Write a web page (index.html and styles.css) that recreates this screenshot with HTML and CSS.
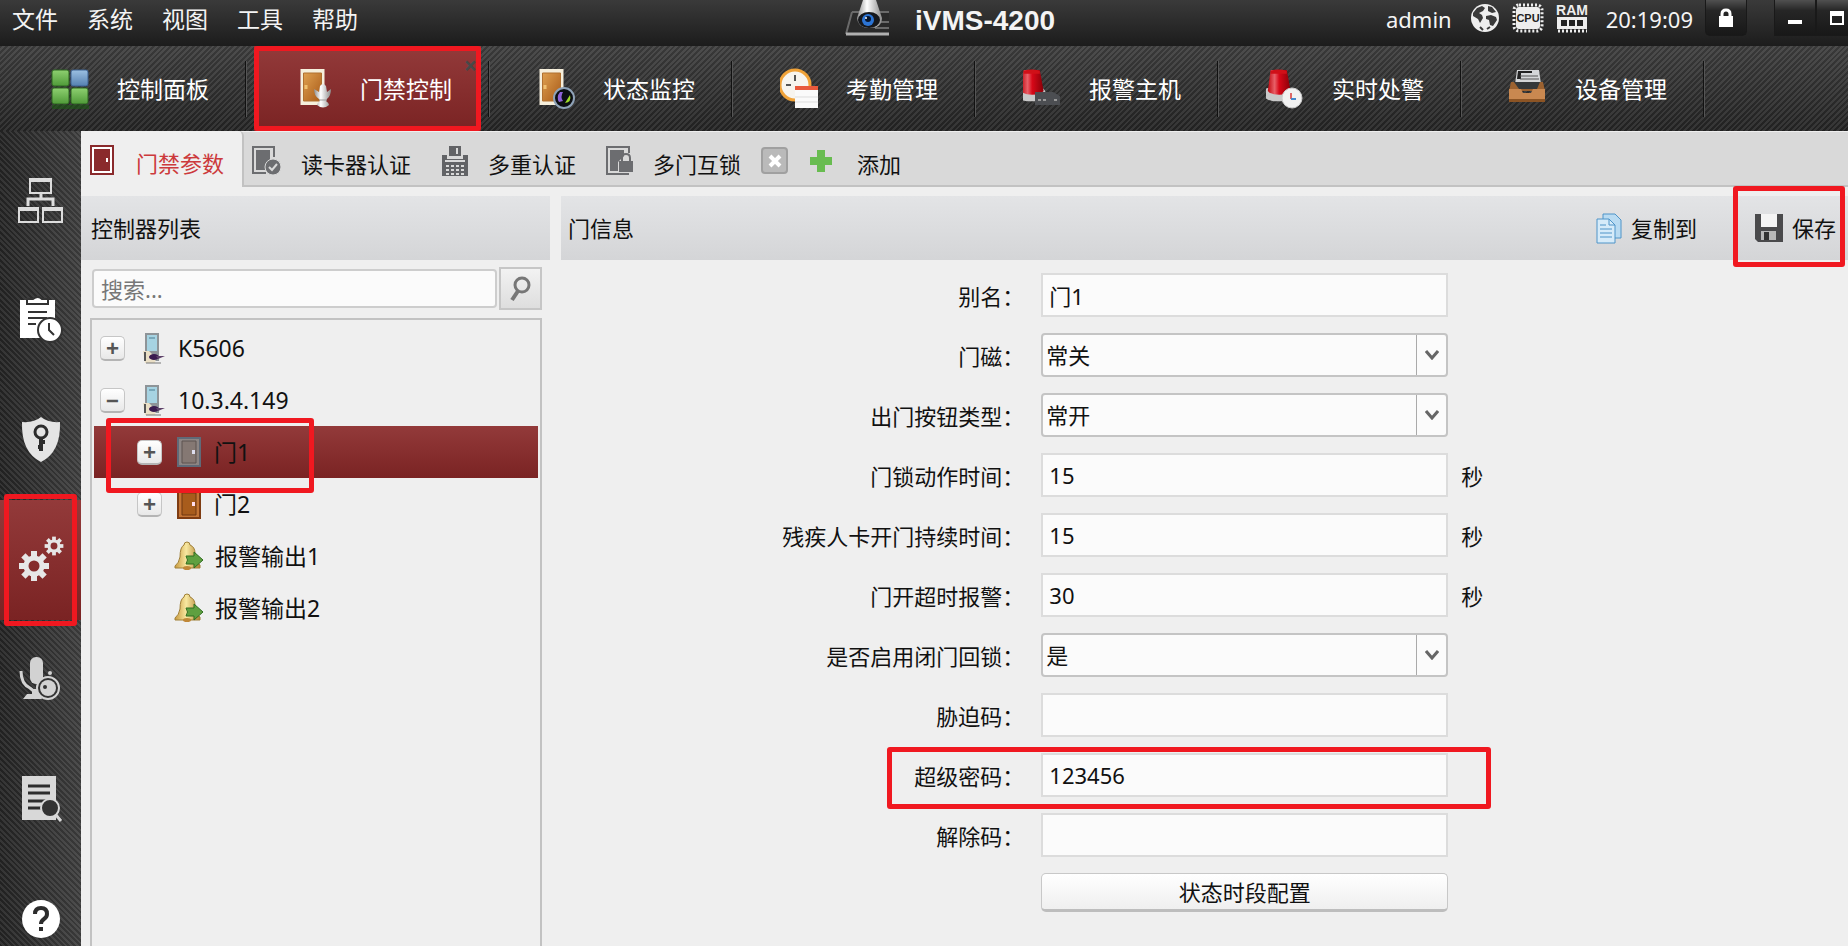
FILE: index.html
```html
<!DOCTYPE html>
<html lang="zh-CN">
<head>
<meta charset="utf-8">
<title>iVMS-4200</title>
<link rel="stylesheet" href="styles.css">
</head>
<body>
<svg class="defs" width="0" height="0" aria-hidden="true">
  <defs>
    <linearGradient id="gGreen" x2="0" y2="1"><stop offset="0" stop-color="#8ed070"/><stop offset="1" stop-color="#4f9a38"/></linearGradient>
    <linearGradient id="gBlue" x2="0" y2="1"><stop offset="0" stop-color="#9cc0e2"/><stop offset="1" stop-color="#5580b0"/></linearGradient>
    <linearGradient id="gWood" x2="1" y2="1"><stop offset="0" stop-color="#dfa050"/><stop offset="1" stop-color="#a85a18"/></linearGradient>
    <linearGradient id="gRed" x2="1" y2="0"><stop offset="0" stop-color="#c00810"/><stop offset=".3" stop-color="#e86068"/><stop offset=".5" stop-color="#d80818"/><stop offset="1" stop-color="#880008"/></linearGradient>
    <linearGradient id="gSteel" x2="1" y2="0"><stop offset="0" stop-color="#8c8c8c"/><stop offset=".4" stop-color="#fff"/><stop offset="1" stop-color="#8c8c8c"/></linearGradient>
    <linearGradient id="gBell" x2="1" y2="0"><stop offset="0" stop-color="#c89a40"/><stop offset=".45" stop-color="#f8e8a0"/><stop offset="1" stop-color="#b08030"/></linearGradient>
    <symbol id="door" viewBox="0 0 24 36"><path d="M0 0h24v36H0z" fill="#f6efdc"/><path d="M3 4h18v28H3z" fill="url(#gWood)" stroke="#b07030"/><path d="M4 16h3v4H4z" fill="#f0c070"/></symbol>
    <symbol id="device" viewBox="0 0 24 32"><path d="M3 1h14v28H3z" fill="#8e9498"/><path d="M5 3h10v16H5z" fill="#a6d3e2"/><path d="M7 5h6v2H7z" fill="#78a8ba"/><path d="M1 19h6l7 7-1 5H3z" fill="#eadfc6"/><path d="M3 20v9" stroke="#555" stroke-width="2"/><ellipse cx="12" cy="25" rx="5" ry="3" fill="#3a1c50"/><path d="M14 24l9 0-7 3z" fill="#5c4068"/><path d="M4 31h15" stroke="#777"/></symbol>
    <symbol id="bell" viewBox="0 0 30 30"><path d="M13 1q3 0 3 3 5 2 5 8v6q2 4 5 6v3H1v-2q4-3 5-9 0-10 4-12 0-3 3-3z" fill="url(#gBell)" stroke="#a08038"/><ellipse cx="13" cy="27" rx="4" ry="2" fill="#c08838"/><path d="M12 15h8v-4l9 8-9 8v-4h-8q3-4 0-8z" fill="#5fa040" stroke="#2f6e20"/></symbol>
    <symbol id="gear" viewBox="-16 -16 32 32"><g fill="#e6e6e6"><path id="t" d="M-3-15h6v8h-6z"/><use href="#t" transform="rotate(45)"/><use href="#t" transform="rotate(90)"/><use href="#t" transform="rotate(135)"/><use href="#t" transform="rotate(180)"/><use href="#t" transform="rotate(225)"/><use href="#t" transform="rotate(270)"/><use href="#t" transform="rotate(315)"/></g><circle r="8" fill="none" stroke="#e6e6e6" stroke-width="5"/></symbol>
    <symbol id="siren" viewBox="0 0 40 42"><path d="M0 26q0-5 4-6h22q4 1 4 6 0 8-15 8T0 26z" fill="#c9c9c9"/><path d="M7 1h17l4 22q-3 4-12 4T4 23z" fill="url(#gRed)"/><path d="M7 2q8-3 17 0v3H7z" fill="#d01018"/></symbol>
  </defs>
</svg>
<div class="app">
  <header class="titlebar">
    <nav class="menu" aria-label="菜单">
      <button>文件</button><button>系统</button><button>视图</button><button>工具</button><button>帮助</button>
    </nav>
    <div class="brand">
      <svg width="46" height="36" viewBox="0 0 46 36"><path d="M7 12h37v20H3z" fill="#2a2a2a"/><path d="M7 12L1 34M7 12h37M30 22h14M30 28h14" fill="none" stroke="#6a6a6a" stroke-width="2"/><path d="M1 34h43" stroke="#b0b0b0" stroke-width="3"/><path d="M18 0h13l6 18q0 10-12 10T12 18z" fill="url(#gSteel)"/><ellipse cx="24" cy="20" rx="11" ry="8" fill="#16181c"/><circle cx="23" cy="20" r="6" fill="#2c74d4"/><circle cx="23" cy="19" r="3" fill="#07152c"/><circle cx="21" cy="18" r="1" fill="#fff"/></svg>
      <h1>iVMS-4200</h1>
    </div>
    <div class="status">
      <span class="user">admin</span>
      <svg width="30" height="30" viewBox="0 0 30 30"><circle cx="15" cy="15" r="14" fill="#eee"/><path d="M3 10l4-5 5-2 3 2-2 3-4 2 3 2 1 3-3 5-2-4-5-3zM18 3l4 1 4 5-4 1-4-2zM16 13l5-1 5 2 1 3-4 6-3-1-1-5-3-1z" fill="#3a3a3a"/><path d="M10 24l3 3M17 26l3-2" stroke="#3a3a3a" stroke-width="2"/></svg>
      <svg width="32" height="30" viewBox="0 0 32 30"><rect x="2" y="2" width="28" height="26" rx="5" fill="none" stroke="#eee" stroke-width="3" stroke-dasharray="2 2"/><rect x="4" y="4" width="24" height="22" rx="3" fill="#eee"/><text class="chip" x="16" y="19" text-anchor="middle">CPU</text></svg>
      <svg width="32" height="32" viewBox="0 0 32 32"><text class="ram" x="16" y="12" text-anchor="middle">RAM</text><path d="M1 14h30v12H1z" fill="#eee"/><path d="M2 28h29" stroke="#eee" stroke-width="3" stroke-dasharray="2 2"/><path d="M5 17h6v6H5zM13 17h6v6h-6zM21 17h6v6h-6z" fill="#222"/></svg>
      <time>20:19:09</time>
      <button class="lock" aria-label="锁定"><svg width="16" height="20" viewBox="0 0 16 20"><path d="M4 10V6q0-4 4-4t4 4v4" fill="none" stroke="#fff" stroke-width="3"/><path d="M1 8h14v11H1z" fill="#fff"/></svg></button>
      <div class="win">
        <button aria-label="最小化"><svg width="14" height="16" viewBox="0 0 14 16"><path d="M0 10h14v4H0z" fill="#fff"/></svg></button><button aria-label="最大化"><svg width="14" height="14" viewBox="0 0 14 14"><path d="M1 3h12v10H1z" fill="none" stroke="#fff" stroke-width="2"/><path d="M0 0h14v5H0z" fill="#fff"/></svg></button>
      </div>
    </div>
  </header>

  <nav class="modules" aria-label="模块">
    <button class="module"><svg width="44" height="44" viewBox="0 0 44 44"><path d="M1 38h37v4H1z" fill="#1c5a14" opacity=".6"/><g stroke="#2c6420"><rect x="1" y="3" width="17" height="16" rx="2" fill="url(#gGreen)"/><rect x="1" y="21" width="17" height="16" rx="2" fill="url(#gGreen)"/><rect x="20" y="21" width="17" height="16" rx="2" fill="url(#gGreen)"/><rect x="20" y="3" width="17" height="16" rx="2" fill="url(#gBlue)" stroke="#3c6090"/></g></svg>控制面板</button>
    <button class="module on"><svg width="44" height="44" viewBox="0 0 44 44"><use href="#door" x="6" y="2" width="25" height="36"/><path d="M26 19q3-4 6 0l1 6 4-3q0 7-4 10l-1 2q3 2 3 4-6 5-12 0 0-2 3-4l-1-2q-5-3-5-10l5 3z" fill="url(#gSteel)"/><path d="M25 33h8" stroke="#999"/></svg>门禁控制<span class="close">×</span><span class="mark"></span></button>
    <button class="module"><svg width="44" height="44" viewBox="0 0 44 44"><use href="#door" x="2" y="2" width="25" height="36"/><circle cx="27" cy="31" r="10" fill="#0c0e12" stroke="#8fa3b8" stroke-width="2"/><path d="M23 25q-4 5-1 10l4-1q-3-4 0-9z" fill="#8e62d8"/><path d="M28 36l5-8q2 7-5 8z" fill="#9edc28"/></svg>状态监控</button>
    <button class="module"><svg width="44" height="44" viewBox="0 0 44 44"><circle cx="15" cy="18" r="15" fill="#f7f4ee" stroke="#f0a238" stroke-width="3"/><path d="M15 8v6M6 18h5" stroke="#555" stroke-width="2"/><path d="M15 19h23v22H15z" fill="#fafafa"/><path d="M15 19h23v4H15z" fill="#e8593c"/><path d="M15 30h23M15 35h23" stroke="#ddd"/></svg>考勤管理</button>
    <button class="module"><svg width="44" height="44" viewBox="0 0 44 44"><use href="#siren" x="-6" y="2" width="38" height="40"/><path d="M12 25h18l7 4v9H12z" fill="#4c4e52"/><path d="M15 33h3M20 33h3M31 33h3" stroke="#999" stroke-width="2"/></svg>报警主机</button>
    <button class="module"><svg width="44" height="44" viewBox="0 0 44 44"><use href="#siren" x="-2" y="2" width="38" height="40"/><circle cx="26" cy="31" r="10" fill="#f1f1f1" stroke="#ccc"/><path d="M25 26v6" stroke="#d66" stroke-width="2"/><path d="M25 32h5" stroke="#48c" stroke-width="2"/></svg>实时处警</button>
    <button class="module"><svg width="44" height="44" viewBox="0 0 44 44"><path d="M8 3h22l2 14H6z" fill="#d4d6d8"/><path d="M9 4h14v2H12v6H8z" fill="#222"/><path d="M11 9h18M11 12h19" stroke="#555"/><path d="M2 15h32l2 9H0z" fill="#9c6230"/><path d="M5 15h26l-3 7H10z" fill="#34383a"/><path d="M0 22h12l2 4h8l2-4h12v12H0z" fill="#c98850"/><path d="M0 32h36v3H0z" fill="#8c5424"/></svg>设备管理</button>
  </nav>

  <div class="body">
    <aside class="rail" aria-label="功能">
      <button aria-label="组织"><svg width="48" height="48" viewBox="0 0 48 48"><g fill="none" stroke="#ddd" stroke-width="2"><path d="M13 3h21v14H13zM2 32h19v14H2zM26 32h19v14H26z"/><path d="M24 17v5M11 30v-7h25v7" stroke-width="3"/></g><path d="M13 2h21v4H13zM2 31h19v4H2zM26 31h19v4H26z" fill="#ddd"/></svg></button>
      <button aria-label="计划"><svg width="48" height="48" viewBox="0 0 48 48"><path d="M3 4h35v38H3z" fill="#fff"/><path d="M10 3h6q5-4 9 0h6v5H10z" fill="#fff" stroke="#333" stroke-width="2"/><path d="M11 16h19M11 22h19M11 28h8" stroke="#333" stroke-width="2"/><circle cx="33" cy="34" r="12" fill="#fff" stroke="#333" stroke-width="2"/><path d="M32 27v7l5 5" fill="none" stroke="#333" stroke-width="2"/></svg></button>
      <button aria-label="权限"><svg width="48" height="48" viewBox="0 0 48 48"><path d="M24 1q7 6 19 5 1 30-19 40Q4 36 5 6q12 1 19-5z" fill="#e4e4e4"/><circle cx="24" cy="16" r="6" fill="none" stroke="#2c2c2c" stroke-width="3"/><path d="M24 22v13M24 26h4M24 31h-3" stroke="#2c2c2c" stroke-width="4"/></svg></button>
      <button class="on" aria-label="设置"><svg width="48" height="48" viewBox="0 0 48 48"><use href="#gear" x="1" y="14" width="32" height="32"/><use href="#gear" x="27" y="0" width="20" height="20"/></svg><span class="mark"></span></button>
      <button aria-label="对讲"><svg width="48" height="48" viewBox="0 0 48 48"><rect x="13" y="1" width="13" height="27" rx="6" fill="#d2d2d2"/><path d="M4 15q0 13 9 17l5 4" fill="none" stroke="#d2d2d2" stroke-width="3"/><path d="M6 43l4-5h5v-5h6l4 10z" fill="#d2d2d2"/><circle cx="33" cy="17" r="2" fill="#d2d2d2"/><circle cx="31" cy="32" r="11" fill="#333" stroke="#d2d2d2" stroke-width="2"/><circle cx="31" cy="32" r="8" fill="#d2d2d2"/><circle cx="28" cy="31" r="2" fill="#333"/></svg></button>
      <button aria-label="查询"><svg width="48" height="48" viewBox="0 0 48 48"><path d="M5 0h34v44H5z" fill="#d8d8d8"/><path d="M11 10h22M11 17h22M11 25h22M11 32h22" stroke="#2c2c2c" stroke-width="3"/><circle cx="33" cy="32" r="9" fill="#333" stroke="#d8d8d8" stroke-width="2"/><path d="M39 39l5 6" stroke="#d8d8d8" stroke-width="3"/></svg></button>
      <button aria-label="帮助"><svg width="48" height="48" viewBox="0 0 48 48"><circle cx="24" cy="23" r="19" fill="#fff"/><path d="M18 18q0-6 6-6t6 6q0 3-3 5t-3 5" fill="none" stroke="#2c2c2c" stroke-width="4"/><path d="M22 31h4v4h-4z" fill="#2c2c2c"/></svg></button>
    </aside>

    <main class="work">
      <div class="tabs">
        <button class="tab on"><svg width="24" height="30" viewBox="0 0 24 30"><path d="M1 1h22v28H1z" fill="#fff" stroke="#8a2a2c" stroke-width="2"/><path d="M4 4h16v22H4z" fill="#8a2a2c"/><path d="M16 13h2v4h-2z" fill="#fff"/></svg>门禁参数</button>
        <button class="tab"><svg width="30" height="32" viewBox="0 0 30 32"><path d="M14 28H1V2h21v10" fill="none" stroke="#6c6d70" stroke-width="2"/><path d="M4 5h14v10l-5 10H4z" fill="#6c6d70"/><circle cx="21" cy="22" r="8" fill="#6c6d70" stroke="#d9d9d9"/><path d="M17 22l3 3 5-6" fill="none" stroke="#d9d9d9" stroke-width="2"/></svg>读卡器认证</button>
        <button class="tab"><svg width="28" height="32" viewBox="0 0 28 32"><path d="M8 1h12v10H8zM1 10h5v4h16v-4h5v21H1z" fill="#626366"/><path d="M15 3h2v6h-2z" fill="#d9d9d9"/><path d="M4 16h20" stroke="#d9d9d9" stroke-width="2"/><path d="M5 21h18M5 25h18M5 29h18" stroke="#d9d9d9" stroke-width="2" stroke-dasharray="3 2"/></svg>多重认证</button>
        <button class="tab"><svg width="28" height="32" viewBox="0 0 28 32"><path d="M23 8V2H1v27h22" fill="none" stroke="#6c6d70" stroke-width="2"/><path d="M4 5h14v6l-6 6v9H4z" fill="#6c6d70"/><path d="M16 17v-4q0-4 4-4t4 4v4" fill="none" stroke="#6c6d70" stroke-width="2"/><path d="M13 16h14v11H13z" fill="#6c6d70"/></svg>多门互锁</button>
        <button class="tabclose" aria-label="关闭标签"><svg width="14" height="14" viewBox="0 0 14 14"><path d="M2 2l10 10M12 2L2 12" stroke="#fff" stroke-width="4"/></svg></button>
        <button class="tab add"><svg width="24" height="24" viewBox="0 0 24 24"><path d="M8 1h8v7h7v8h-7v7H8v-7H1V8h7z" fill="#68bc50"/></svg>添加</button>
      </div>

      <div class="panes">
        <section class="left">
          <div class="panehead"><h2>控制器列表</h2></div>
          <form class="search">
            <input type="text" placeholder="搜索..." aria-label="搜索">
            <button type="button" aria-label="搜索"><svg width="22" height="28" viewBox="0 0 22 28"><circle cx="12" cy="10" r="7" fill="none" stroke="#777" stroke-width="3"/><path d="M8 16l-6 9" stroke="#777" stroke-width="4"/></svg></button>
          </form>
          <ul class="tree">
            <li class="node"><button class="toggle" aria-label="展开">+</button><svg width="24" height="32"><use href="#device"/></svg>K5606</li>
            <li class="node"><button class="toggle" aria-label="收起">−</button><svg width="24" height="32"><use href="#device"/></svg>10.3.4.149</li>
            <li class="node child on"><button class="toggle" aria-label="展开">+</button><svg width="24" height="30" viewBox="0 0 24 30"><path d="M1 1h22v28H1z" fill="#8d8583" stroke="#606a78" stroke-width="2"/><path d="M5 4h14v22H5z" fill="#857873" stroke="#5c5250"/><path d="M15 13h3v4h-3z" fill="#dde"/></svg>门1<span class="mark"></span></li>
            <li class="node child"><button class="toggle" aria-label="展开">+</button><svg width="24" height="30" viewBox="0 0 24 30"><path d="M1 1h22v28H1z" fill="#c47434" stroke="#7e3c12" stroke-width="2"/><path d="M5 4h14v22H5z" fill="#a85c1c" stroke="#6e3610"/><path d="M15 13h3v4h-3z" fill="#fde"/></svg>门2</li>
            <li class="node leaf"><svg width="30" height="30"><use href="#bell"/></svg>报警输出1</li>
            <li class="node leaf"><svg width="30" height="30"><use href="#bell"/></svg>报警输出2</li>
          </ul>
        </section>

        <section class="right">
          <div class="panehead"><h2>门信息</h2>
            <button class="action"><svg width="26" height="31" viewBox="0 0 26 31"><path d="M7 1h12l6 6v18H7z" fill="#b9dbf2" stroke="#4e94c8"/><path d="M1 6h12l6 6v18H1z" fill="#d6ebf9" stroke="#4e94c8"/><path d="M13 6v6h6M4 12h6M4 16h12M4 20h12M4 24h12" fill="none" stroke="#4e94c8"/></svg>复制到</button>
            <button class="action save"><svg width="28" height="28" viewBox="0 0 28 28"><path d="M0 0h28v28H3l-3-3z" fill="#4a4a4c"/><path d="M6 0h16v13H6z" fill="#f4f4f4"/><path d="M6 17h15v9H6z" fill="#b8b8b8"/><path d="M9 18h5v8H9z" fill="#333"/></svg>保存<span class="mark"></span></button>
          </div>
          <form class="fields">
            <div class="row"><label for="f1">别名：</label><input id="f1" type="text" value="门1"></div>
            <div class="row"><label for="f2">门磁：</label><span class="pick"><select id="f2"><option>常关</option></select><svg width="14" height="10" viewBox="0 0 14 10"><path d="M1 1l6 7 6-7" fill="none" stroke="#666" stroke-width="3"/></svg></span></div>
            <div class="row"><label for="f3">出门按钮类型：</label><span class="pick"><select id="f3"><option>常开</option></select><svg width="14" height="10" viewBox="0 0 14 10"><path d="M1 1l6 7 6-7" fill="none" stroke="#666" stroke-width="3"/></svg></span></div>
            <div class="row"><label for="f4">门锁动作时间：</label><input id="f4" type="text" value="15"><span class="unit">秒</span></div>
            <div class="row"><label for="f5">残疾人卡开门持续时间：</label><input id="f5" type="text" value="15"><span class="unit">秒</span></div>
            <div class="row"><label for="f6">门开超时报警：</label><input id="f6" type="text" value="30"><span class="unit">秒</span></div>
            <div class="row"><label for="f7">是否启用闭门回锁：</label><span class="pick"><select id="f7"><option>是</option></select><svg width="14" height="10" viewBox="0 0 14 10"><path d="M1 1l6 7 6-7" fill="none" stroke="#666" stroke-width="3"/></svg></span></div>
            <div class="row"><label for="f8">胁迫码：</label><input id="f8" type="text"></div>
            <div class="row"><label for="f9">超级密码：</label><input id="f9" type="text" value="123456"><span class="markbox"><span class="mark"></span></span></div>
            <div class="row"><label for="f10">解除码：</label><input id="f10" type="text"></div>
            <div class="row"><button type="button" class="config">状态时段配置</button></div>
          </form>
        </section>
      </div>
    </main>
  </div>
</div>
</body>
</html>
```
FILE: styles.css
```css
* { box-sizing: border-box; }

body {
  margin: 0;
  font: 23px/30px "Noto Sans", "Noto Sans CJK SC", sans-serif;
  color: #111;
  background: #efefef;
}

button, input, select {
  font: inherit;
  color: inherit;
  margin: 0;
  border-radius: 0;
}

button {
  padding: 0;
  border: 0;
  background: none;
  white-space: nowrap;
}

svg { display: block; flex: none; }
h1, h2 { margin: 0; }
.defs { position: absolute; }

.mark {
  position: absolute;
  border: 5px solid #f01820;
  border-radius: 3px;
  pointer-events: none;
  z-index: 2;
}

.app {
  display: flex;
  flex-direction: column;
  height: 100vh;
  overflow: hidden;
}

/* title bar */
.titlebar {
  display: grid;
  grid-template-columns: 1fr auto 1fr;
  height: 46px;
  flex: none;
  color: #f4f4f4;
  background: linear-gradient(#3a3a3a, #1c1c1c);
}

.menu {
  display: flex;
  gap: 29px;
  padding: 4px 0 0 12px;
  align-items: flex-start;
}

.brand {
  display: flex;
  gap: 24px;
  align-items: flex-start;
  margin-left: 56px;
}

.brand h1 {
  font: bold 28px/30px "Liberation Sans", sans-serif;
  padding-top: 6px;
  margin-right: 4px;
}

.status {
  display: flex;
  justify-content: flex-end;
  align-items: flex-start;
  font-size: 22px;
}

.status > svg { margin: 3px 12px 0 0; }
.user { margin: 4px 18px 0 0; }
.status time { margin: 4px 12px 0 6px; }
.chip { font: bold 11px "Liberation Sans", sans-serif; fill: #222; }
.ram { font: bold 14px "Liberation Sans", sans-serif; fill: #eee; }

.lock, .win button {
  display: flex;
  align-items: center;
  justify-content: center;
  width: 42px;
  height: 36px;
  border: 1px solid #191919;
  border-top: 0;
  background: linear-gradient(#505050, #262626 30%, #181818);
}

.lock { border-radius: 0 0 5px 5px; margin-right: 27px; }
.win { display: flex; width: 74px; overflow: hidden; }
.win button { flex: none; }

/* module bar */
.modules {
  display: flex;
  flex: none;
  height: 85px;
  padding-left: 3px;
  color: #fff;
  background:
    linear-gradient(#46464699, #1e1e1e99),
    repeating-linear-gradient(135deg, #262626 0 2px, #575757 2px 4px);
}

.module {
  position: relative;
  display: flex;
  align-items: center;
  gap: 22px;
  width: 243px;
  padding-left: 48px;
}

.module::after {
  content: "";
  position: absolute;
  right: -1px;
  top: 15px;
  bottom: 14px;
  border-left: 1px solid #111;
  border-right: 1px solid #555;
}

.module.on { isolation: isolate; }

.module.on::before {
  content: "";
  position: absolute;
  inset: 0 8px;
  z-index: -1;
  background: linear-gradient(#933a3a, #7a2323);
}

.module .mark { inset: 0 8px; }

.close {
  position: absolute;
  right: 12px;
  top: 4px;
  font-weight: bold;
  color: #484848;
}

/* body */
.body { display: flex; flex: 1; min-height: 0; }

.rail {
  width: 81px;
  flex: none;
  padding-top: 9px;
  overflow: hidden;
  background:
    linear-gradient(90deg, #1e1e1e99, #46464699),
    repeating-linear-gradient(45deg, #262626 0 2px, #575757 2px 4px);
}

.rail button {
  position: relative;
  display: flex;
  align-items: center;
  justify-content: center;
  width: 100%;
  height: 120px;
}

.rail .on { background: linear-gradient(#933a3a, #7a2323); }
.rail .mark { inset: -6px 4px; }

.work { flex: 1; min-width: 0; display: flex; flex-direction: column; }

/* tabs */
.tabs {
  display: flex;
  align-items: center;
  height: 56px;
  flex: none;
  font-size: 22px;
  background: #d9d9d9;
  border-top: 1px solid #eee;
  border-bottom: 2px solid #c2c2c2;
}

.tab {
  display: flex;
  align-items: center;
  gap: 19px;
  height: 46px;
  padding-top: 10px;
  margin-right: 30px;
}

.tab svg { margin-bottom: 6px; }

.tab.on {
  height: 56px;
  gap: 22px;
  padding: 9px 18px 0 9px;
  margin-right: 8px;
  color: #cc3a3c;
  background: #efefef;
  border-right: 2px solid #c2c2c2;
  border-radius: 0 5px 0 0;
}

.tab:nth-child(4) { margin-right: 20px; }

.tabclose {
  display: flex;
  align-items: center;
  justify-content: center;
  width: 27px;
  height: 27px;
  margin: 4px 21px 0 0;
  border: 2px solid #a0a0a0;
  border-radius: 4px;
  background: #bababa;
}

.tab.add { gap: 24px; }

/* panes */
.panes {
  display: flex;
  flex: 1;
  min-height: 0;
  gap: 11px;
  padding-top: 9px;
}

.left { display: flex; flex-direction: column; width: 469px; flex: none; }
.right { flex: 1; min-width: 0; }

.panehead {
  display: flex;
  align-items: center;
  height: 64px;
  flex: none;
  padding-left: 10px;
  font-size: 22px;
  background: linear-gradient(#e3e4e6, #d4d5d7);
}

.right .panehead { padding: 0 12px 0 7px; }
.panehead h2 { font-size: 22px; font-weight: normal; margin-right: auto; }

.action {
  position: relative;
  display: flex;
  align-items: center;
  gap: 9px;
}

.save { margin-left: 58px; }
.save .mark { top: -27px; left: -22px; right: -9px; height: 81px; }

.search { display: flex; align-items: center; gap: 2px; padding: 7px 8px 0 11px; }

.search input {
  flex: 1;
  min-width: 0;
  height: 39px;
  padding: 0 7px;
  border: 2px solid #cdcdcd;
  border-radius: 4px;
  background: #fbfbfb;
  font-size: 22px;
}

.search input::placeholder { color: #777; }

.search button {
  display: flex;
  align-items: center;
  justify-content: center;
  width: 43px;
  height: 43px;
  border: 2px solid #c6c6c6;
  background: linear-gradient(#f2f2f2, #dedede);
}

.tree {
  flex: 1;
  margin: 8px 8px 0 9px;
  padding: 2px;
  border: 2px solid #c2c2c2;
  border-bottom: 0;
  list-style: none;
}

.node {
  position: relative;
  display: flex;
  align-items: center;
  height: 52px;
  padding-left: 6px;
}

.node svg { margin: 0 12px 0 17px; }
.node.child { padding-left: 43px; }
.node.child svg { margin: 0 13px 0 15px; }
.node.leaf { padding-left: 80px; }
.node.leaf svg { margin: 0 11px 0 0; }
.node.on { background: linear-gradient(#933a3a, #7a2323); }
.node .mark { left: 12px; top: -8px; width: 208px; height: 75px; }

.toggle {
  width: 25px;
  height: 25px;
  border: 1px solid #c6c6c6;
  border-bottom: 2px solid #b4b4b4;
  border-radius: 5px;
  background: linear-gradient(#fff, #e8e8e8);
  font-weight: bold;
  line-height: 20px;
  color: #555;
}

/* form */
.fields { display: grid; gap: 16px; padding-top: 13px; font-size: 22px; }

.row {
  display: grid;
  grid-template-columns: 36% 407px auto;
  column-gap: 17px;
  align-items: center;
  min-height: 44px;
}

.row label { text-align: right; white-space: nowrap; padding-top: 2px; }

.row input, .row select {
  width: 100%;
  height: 44px;
  padding: 0 6px;
  border: 2px solid #dcdcdc;
  background: #fbfbfb;
}

.unit { padding-top: 2px; margin-left: -4px; }
.pick { position: relative; display: block; }

.row select {
  appearance: none;
  padding: 0 3px;
  border-color: #c4c4c4;
  border-radius: 4px;
}

.pick::after {
  content: "";
  position: absolute;
  right: 31px;
  top: 2px;
  bottom: 2px;
  border-left: 1px solid #aaa;
}

.pick svg { position: absolute; right: 9px; top: 17px; pointer-events: none; }

.markbox { position: relative; width: 31px; height: 44px; }
.markbox .mark { right: 5px; top: -6px; width: 604px; height: 62px; }

.config {
  grid-column: 2;
  height: 39px;
  align-self: start;
  border: 1px solid #c8c8c8;
  border-bottom: 3px solid #bdbdbd;
  border-radius: 5px;
  background: linear-gradient(#fff, #efefef);
}
```
